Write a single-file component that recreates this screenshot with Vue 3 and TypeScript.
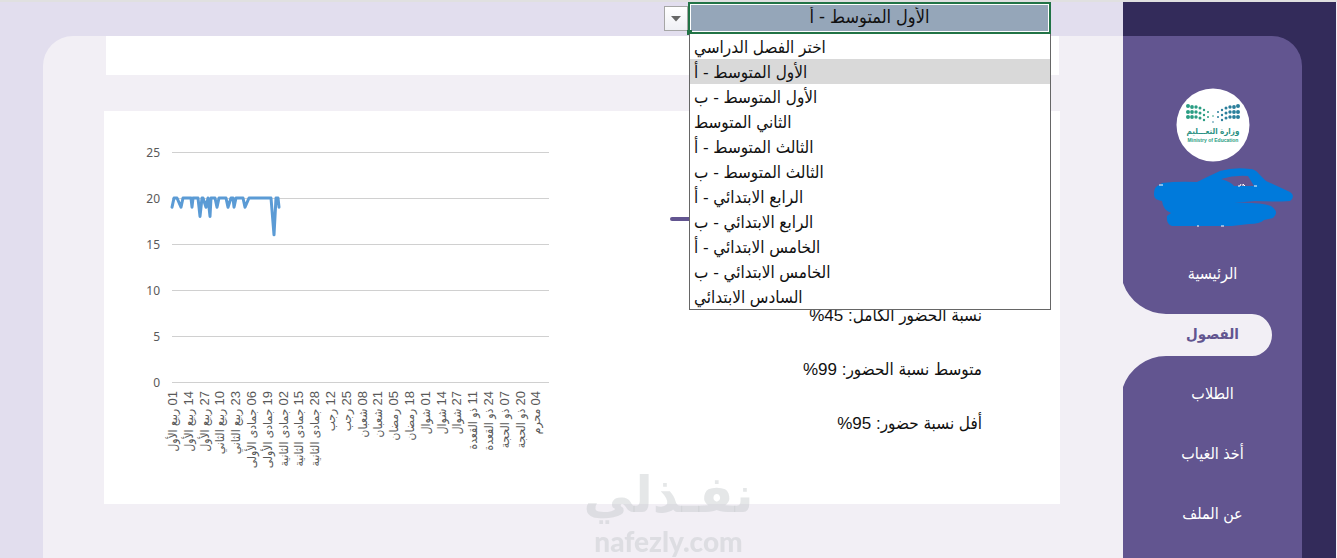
<script setup lang="ts">
import { ref } from 'vue'

const classes = [
  'اختر الفصل الدراسي',
  'الأول المتوسط - أ',
  'الأول المتوسط - ب',
  'الثاني المتوسط',
  'الثالث المتوسط - أ',
  'الثالث المتوسط - ب',
  'الرابع الابتدائي - أ',
  'الرابع الابتدائي - ب',
  'الخامس الابتدائي - أ',
  'الخامس الابتدائي - ب',
  'السادس الابتدائي',
]
const selected = ref(classes[1])
const open = ref(true)

function choose(name: string) {
  selected.value = name
  open.value = false
}

const navItems = ['الرئيسية', 'الفصول', 'الطلاب', 'أخذ الغياب', 'عن الملف']
const active = ref('الفصول')

const stats = [
  { label: 'نسبة الحضور الكامل', value: '%45' },
  { label: 'متوسط نسبة الحضور', value: '%99' },
  { label: 'أفل نسبة حضور', value: '%95' },
]

const ticks = [25, 20, 15, 10, 5, 0]
const tickY = (value: number) => 271 - value * 9.2

const days: [string, string][] = [
  ['01', 'ربيع الأول'], ['14', 'ربيع الأول'], ['27', 'ربيع الأول'],
  ['10', 'ربيع الثاني'], ['23', 'ربيع الثاني'],
  ['06', 'جمادى الأولى'], ['19', 'جمادى الأولى'],
  ['02', 'جمادى الثانية'], ['15', 'جمادى الثانية'], ['28', 'جمادى الثانية'],
  ['12', 'رجب'], ['25', 'رجب'], ['08', 'شعبان'], ['21', 'شعبان'],
  ['05', 'رمضان'], ['18', 'رمضان'], ['01', 'شوال'], ['14', 'شوال'], ['27', 'شوال'],
  ['11', 'ذو القعدة'], ['24', 'ذو القعدة'], ['07', 'ذو الحجة'], ['20', 'ذو الحجة'],
  ['04', 'محرم'],
]
const dayX = (index: number) => 73 + index * 15.8

// Attendance readings: horizontal position and number of pupils present
const readings: [number, number][] = [
  [68, 19], [70, 20], [73, 20], [77, 19], [79, 20], [87, 20], [88, 19], [89, 20],
  [94, 20], [96, 18], [98, 20], [99, 20], [102, 19], [104, 20], [106, 18], [107, 20],
  [111, 20], [113, 19], [115, 20], [122, 20], [124, 19], [127, 20], [129, 20],
  [130, 19], [132, 20], [139, 20], [141, 19], [145, 20], [167, 20], [170, 16],
  [172, 20], [174, 20], [175, 19],
]
const line = readings.map(([x, n]) => `${x},${tickY(n)}`).join(' ')

const columns = [
  [12, [18, 24, 29], 2], [16, [19, 24, 29], 1.9], [20, [19, 24, 29], 1.7],
  [24, [20, 25, 30], 1.5], [28, [22, 27, 32], 1.2], [32, [24, 29], 1],
] as [number, number[], number][]
const dots = columns.flatMap(([x, ys, r]) =>
  ys.flatMap((y) => [
    { x, y, r, fill: '#2a9d83' },
    { x: 74 - x, y, r, fill: '#2b7f9c' },
  ]),
)
</script>

<template>
  <div class="page">
    <main class="main">
      <header class="bar">
        <div class="picker">
          <button class="arrow" type="button" aria-label="القائمة" @click="open = !open">
            <svg width="10" height="6" viewBox="0 0 10 6"><path d="M0 0H10L5 5.500Z" fill="#666" /></svg>
          </button>
          <select v-model="selected" class="cell" aria-label="الفصل الدراسي" @mousedown.prevent="open = !open">
            <option v-for="name in classes" :key="name">{{ name }}</option>
          </select>
          <span class="handle"></span>
          <ul v-if="open" class="menu" role="listbox" aria-label="الفصول">
            <li
              v-for="name in classes"
              :key="name"
              role="option"
              :aria-selected="name === selected"
              :class="{ chosen: name === selected }"
              @click="choose(name)"
            ><bdi dir="rtl">{{ name }}</bdi></li>
          </ul>
        </div>
      </header>

      <div class="panel">
        <section class="card title-card"></section>
        <section class="card report">
          <svg class="chart" width="456" height="393" viewBox="0 0 456 393" role="img" aria-label="الحضور">
            <g v-for="tick in ticks" :key="tick">
              <line x1="68" x2="445" :y1="tickY(tick)" :y2="tickY(tick)" stroke="#d0d0d0" shape-rendering="crispEdges" />
              <text class="tick" x="56" :y="tickY(tick) + 5" text-anchor="end">{{ tick }}</text>
            </g>
            <polyline :points="line" fill="none" stroke="#5b9bd5" stroke-width="3" stroke-linejoin="round" stroke-linecap="round" />
            <text
              v-for="(day, i) in days"
              :key="i"
              class="day"
              direction="rtl"
              :transform="`translate(${dayX(i)} 280) rotate(-90)`"
            ><tspan class="num">{{ day[0] }}</tspan> {{ day[1] }}</text>
          </svg>
          <div class="summary">
            <hr class="rule" />
            <p v-for="stat in stats" :key="stat.label">{{ stat.label }}: <bdi dir="ltr">{{ stat.value }}</bdi></p>
          </div>
        </section>
      </div>
    </main>

    <aside class="side">
      <div class="side-inner">
        <svg class="logo" width="74" height="74" viewBox="0 0 74 74" role="img" aria-label="وزارة التعليم">
          <circle cx="37" cy="37" r="36.500" fill="#fff" />
          <circle v-for="(dot, i) in dots" :key="i" :cx="dot.x" :cy="dot.y" :r="dot.r" :fill="dot.fill" />
          <circle cx="37" cy="28" r="0.800" fill="#2a9d83" />
          <circle cx="37" cy="34" r="0.800" fill="#2b7f9c" />
          <text class="logo-ar" x="37" y="46" text-anchor="middle">وزارة التعـــليم</text>
          <text class="logo-en" x="37" y="54" text-anchor="middle">Ministry of Education</text>
        </svg>
        <svg class="scribble" width="140" height="60" viewBox="0 0 140 60" aria-hidden="true">
          <path
            fill="#007adb"
            fill-rule="evenodd"
            d="M8 16 Q24 14 43 15 Q53 10 66 4 Q80 0 96 2 Q101 2 105 7 L112 14 L136 25 Q142 29 136 34 Q120 35 101 34 L80 36 Q105 35 117 39 Q126 45 119 51 L110 53 Q106 57 95 57 L78 59 H18 Q12 57 13 49 L17 46 Q9 43 8 34 Q-1 33 0 26 Q0 20 5 18Z
               M67 12 Q80 8 94 9 L100 19 H80 Q77 15 67 12Z"
          />
          <path d="M5 18h4M84 19h2l1-2M89 19v-2l2 2M100 19h3M43 59h2M67 59h3" fill="none" stroke="#fff" />
        </svg>
        <nav class="nav" aria-label="الأقسام">
          <a v-for="item in navItems" :key="item" href="#" :class="{ active: item === active }" @click.prevent="active = item">
            <svg v-if="item === active" class="tab" width="150" height="104" viewBox="0 0 150 104" aria-hidden="true">
              <path d="M0 0A46 46 0 0 0 43 31H129A20 21 0 0 1 149 52A20 21 0 0 1 129 73H43A46 46 0 0 0 0 104Z" fill="#f2eff5" />
            </svg>
            <span>{{ item }}</span>
          </a>
        </nav>
      </div>
    </aside>

    <div class="mark" aria-hidden="true">
      <span class="mark-ar">نفـذلي</span>
      <span class="mark-en">nafezly.com</span>
    </div>
  </div>
</template>

<style>
html,
body {
  margin: 0;
  background: #e2deee;
}
</style>

<style scoped>
.page {
  box-sizing: border-box;
  display: grid;
  grid-template-columns: minmax(0, 1fr) 214px;
  min-height: 100vh;
  border-top: 2px solid #e0e0e0;
  background: #e2deee;
  font-family: 'Liberation Sans', 'DejaVu Sans Condensed', 'DejaVu Sans', sans-serif;
}
.main {
  display: flex;
  flex-direction: column;
}
.bar {
  display: flex;
  justify-content: flex-end;
  height: 34px;
  padding-right: 72px;
}
.picker {
  position: relative;
  display: flex;
  align-items: flex-start;
}
.arrow {
  display: flex;
  align-items: center;
  justify-content: center;
  box-sizing: border-box;
  width: 24px;
  height: 25px;
  margin-top: 4px;
  padding: 0;
  border: 1px solid #a6a6a6;
  background: linear-gradient(#fff, #eff0f5);
}
.cell {
  appearance: none;
  box-sizing: border-box;
  width: 363px;
  height: 32px;
  padding: 0 0 2px;
  border: 2px solid #217346;
  border-radius: 0;
  box-shadow: inset 0 0 0 1px #fff;
  background: #95a6b9;
  color: #111;
  font: 18px 'Liberation Sans', 'DejaVu Sans Condensed', 'DejaVu Sans', sans-serif;
  direction: rtl;
  text-align: center;
  text-align-last: center;
}
.handle {
  position: absolute;
  left: 23px;
  top: 28px;
  width: 5px;
  height: 5px;
  background: #217346;
}
.menu {
  position: absolute;
  z-index: 3;
  top: 32px;
  left: 25px;
  right: 0;
  margin: 0;
  padding: 0;
  border: 1px solid #666;
  border-top: 0;
  background: #fff;
  color: #111;
  font-size: 17px;
  line-height: 28px;
  list-style: none;
}
.menu li {
  height: 25px;
  padding-left: 4px;
  white-space: nowrap;
  cursor: default;
}
.menu .chosen {
  background: #d9d9d9;
}
.panel {
  flex: 1;
  margin-left: 43px;
  padding: 0 63px 54px 61px;
  border-top-left-radius: 30px;
  background: #f2eff5;
}
.card {
  background: #fff;
}
.title-card {
  height: 39px;
  margin: 0 1px 36px 2px;
}
.report {
  display: flex;
  justify-content: space-between;
}
.chart {
  flex: none;
}
.tick {
  fill: #595959;
  font: 12px 'Noto Sans', sans-serif;
}
.day {
  fill: #595959;
  font-size: 12px;
}
.num {
  font-size: 13px;
}
.summary {
  width: 312px;
  padding: 106px 78px 0 0;
  direction: rtl;
  color: #111;
  font-size: 17px;
}
.rule {
  height: 4px;
  margin: 0 0 84px;
  border: 0;
  border-radius: 2px;
  background: #625590;
}
.summary p {
  height: 22px;
  margin: 0 0 32px;
  line-height: 22px;
}
.side {
  border-right: 1px solid #f2eff5;
  background: #332b5a;
}
.side-inner {
  display: flex;
  flex-direction: column;
  align-items: center;
  box-sizing: border-box;
  height: calc(100% - 34px);
  margin: 34px 34px 0 0;
  padding-top: 52px;
  border-top-right-radius: 30px;
  background: #625590;
}
.logo {
  flex: none;
}
.logo-ar {
  fill: #2a9083;
  font-size: 8px;
  font-weight: bold;
}
.logo-en {
  fill: #2a9d83;
  font-size: 5px;
  font-weight: bold;
}
.scribble {
  flex: none;
  margin: 5px 0 0 22px;
}
.nav {
  display: flex;
  flex-direction: column;
  align-self: stretch;
  margin-top: 17px;
}
.nav a {
  position: relative;
  height: 60px;
  color: #fff;
  font-size: 16px;
  line-height: 60px;
  text-align: center;
  text-decoration: none;
}
.nav span {
  position: relative;
}
.nav .active {
  color: #625590;
  font-size: 15px;
  font-weight: bold;
}
.tab {
  position: absolute;
  top: -21px;
  left: 0;
}
.mark {
  position: fixed;
  left: 50%;
  bottom: 0;
  display: flex;
  flex-direction: column;
  align-items: center;
  transform: translateX(-50%);
  color: rgba(190, 194, 198, 0.4);
  font-weight: bold;
  pointer-events: none;
}
.mark-ar {
  font-family: 'DejaVu Sans', sans-serif;
  font-size: 50px;
  line-height: 58px;
}
.mark-en {
  font-family: Lato, sans-serif;
  font-size: 28px;
  font-weight: 900;
  line-height: 34px;
}
</style>
